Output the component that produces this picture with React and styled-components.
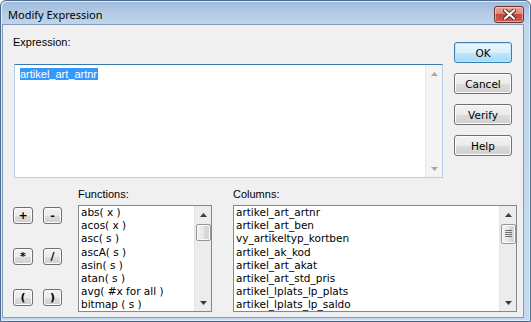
import React from 'react';
import styled, { createGlobalStyle } from 'styled-components';

const Global = createGlobalStyle`
  html, body { margin: 0; padding: 0; background: #ffffff; }
  body { width: 531px; height: 322px; overflow: hidden; font-family: "Liberation Sans", Arial, sans-serif; }
`;

const Window = styled.div`
  width: 531px;
  height: 322px;
  box-sizing: border-box;
  display: flex;
  flex-direction: column;
  border: 1px solid #4b6a8f;
  border-radius: 6px 6px 0 0;
  padding: 0 6px 3px 1px;
  background: linear-gradient(#9db8d9 0px, #b3cbe7 12px, #c2d6ed 24px, #c6d9ef 100%);
  box-shadow: inset 1px 1px 0 #e2ecf7, inset -1px -1px 0 #e2ecf7;
`;

const TitleBar = styled.div`
  height: 23px;
  display: flex;
  align-items: center;
  justify-content: space-between;
  padding-left: 6px;
`;

const Title = styled.div`
  font-family: "Noto Sans", "Open Sans", sans-serif;
  font-size: 11px;
  color: #000;
  margin-top: 3px;
`;

const CloseButton = styled.div`
  width: 28px;
  height: 15px;
  margin-top: 4px;
  border: 1px solid #6b3431;
  border-radius: 3px;
  display: flex;
  align-items: center;
  justify-content: center;
  background: linear-gradient(#eaa99b 0%, #dc8a7a 45%, #c5473a 50%, #cf5f4f 100%);
  box-shadow: inset 0 0 0 1px rgba(255, 220, 210, 0.55);
`;

const Client = styled.div`
  flex: 1;
  display: flex;
  flex-direction: column;
  background: #f0f0f0;
  border: 1px solid #7e9abd;
  font-size: 11px;
  color: #000;
`;

const TopSection = styled.div`
  display: flex;
  padding: 11px 0 0 10px;
`;

const ExprColumn = styled.div`
  display: flex;
  flex-direction: column;
`;

const Label = styled.div`
  height: 13px;
  line-height: 13px;
  margin-bottom: ${p => p.$gap || 4}px;
  white-space: nowrap;
`;

const TextBox = styled.div`
  margin-left: 1px;
  width: 429px;
  height: 114px;
  box-sizing: border-box;
  display: flex;
  background: #fff;
  border: 1px solid #b5cfe7;
  border-top-color: #3d7bad;
`;

const TextArea = styled.div`
  flex: 1;
  padding: 3px 0 0 5px;
  line-height: 13px;
`;

const Selected = styled.span`
  background: #3399ff;
  color: #fff;
  padding: 0 1px 0 0;
`;

const ButtonColumn = styled.div`
  display: flex;
  flex-direction: column;
  gap: 10px;
  margin-left: 11px;
  padding-top: 6px;
`;

const Button = styled.div`
  width: 58px;
  height: 21px;
  box-sizing: border-box;
  border: 1px solid ${p => (p.$default ? '#3c7fb1' : '#707070')};
  border-radius: 3px;
  display: flex;
  align-items: center;
  justify-content: center;
  font-family: "DejaVu Sans", sans-serif;
  font-size: 10.5px;
  color: #000;
  background: ${p =>
    p.$default
      ? 'linear-gradient(#eaf6fd 0%, #d9f0fc 50%, #bee6fd 51%, #a7d9f5 100%)'
      : 'linear-gradient(#f2f2f2 0%, #ebebeb 50%, #dddddd 51%, #cfcfcf 100%)'};
  box-shadow: inset 0 0 0 1px ${p => (p.$default ? '#bde4fb' : '#fcfcfc')};
`;

const BottomSection = styled.div`
  display: flex;
  align-items: flex-start;
  padding-left: 10px;
  margin-top: 10px;
`;

const OpsGrid = styled.div`
  display: grid;
  grid-template-columns: 20px 19px;
  grid-auto-rows: 17px;
  column-gap: 10px;
  row-gap: 24px;
  margin-top: 19px;
`;

const OpButton = styled(Button)`
  width: 100%;
  height: 17px;
  font-size: 11px;
  font-weight: bold;
  line-height: 1;
  padding-bottom: 1px;
`;

const Group = styled.div`
  display: flex;
  flex-direction: column;
  margin-left: ${p => p.$ml}px;
  width: ${p => p.$w}px;
`;

const ListBox = styled.div`
  height: 107px;
  box-sizing: border-box;
  border: 1px solid #828790;
  background: #fff;
  display: flex;
`;

const Items = styled.div`
  flex: 1;
  overflow: hidden;
  padding-left: 2px;
  font-family: "DejaVu Sans", sans-serif;
  font-size: 10.5px;
`;

const Item = styled.div`
  height: 13.2px;
  line-height: 13px;
  white-space: nowrap;
`;

const ScrollBar = styled.div`
  width: 17px;
  display: flex;
  flex-direction: column;
  background: ${p => (p.$disabled ? '#f4f4f4' : '#ececec')};
  border-left: 1px solid ${p => (p.$disabled ? '#e8e8e8' : '#e3e3e3')};
  box-sizing: border-box;
`;

const Arrow = styled.div`
  height: 17px;
  display: flex;
  align-items: center;
  justify-content: center;
`;

const Track = styled.div`
  flex: 1;
  display: flex;
  flex-direction: column;
  align-items: center;
`;

const Thumb = styled.div`
  width: 15px;
  height: ${p => p.$h}px;
  margin-top: 1px;
  box-sizing: border-box;
  border: 1px solid #979797;
  border-radius: 2px;
  background: linear-gradient(90deg, #f3f3f3 0%, #e7e7e7 50%, #dadada 51%, #d4d4d4 100%);
  box-shadow: inset 0 0 0 1px #fafafa;
  display: flex;
  align-items: center;
  justify-content: center;
`;

const ArrowGlyph = ({ dir, color }) => (
  <svg width="7" height="4" viewBox="0 0 7 4">
    {dir === 'up' ? (
      <polygon points="3.5,0 7,4 0,4" fill={color} />
    ) : (
      <polygon points="0,0 7,0 3.5,4" fill={color} />
    )}
  </svg>
);

const Grip = () => (
  <svg width="7" height="8" viewBox="0 0 7 8">
    {[0, 2, 4, 6].map(y => (
      <rect key={y} x="0" y={y} width="7" height="1" fill="#6f6f6f" />
    ))}
  </svg>
);

const VScroll = ({ disabled, thumb, grip }) => {
  const c = disabled ? '#a9a9a9' : '#3b3b3b';
  return (
    <ScrollBar $disabled={disabled}>
      <Arrow><ArrowGlyph dir="up" color={c} /></Arrow>
      <Track>{thumb ? <Thumb $h={thumb}>{grip && <Grip />}</Thumb> : null}</Track>
      <Arrow><ArrowGlyph dir="down" color={c} /></Arrow>
    </ScrollBar>
  );
};

const functions = [
  'abs( x )',
  'acos( x )',
  'asc( s )',
  'ascA( s )',
  'asin( s )',
  'atan( s )',
  'avg( #x for all )',
  'bitmap ( s )',
];

const columns = [
  'artikel_art_artnr',
  'artikel_art_ben',
  'vy_artikeltyp_kortben',
  'artikel_ak_kod',
  'artikel_art_akat',
  'artikel_art_std_pris',
  'artikel_lplats_lp_plats',
  'artikel_lplats_lp_saldo',
];

const ops = ['+', '-', '*', '/', '(', ')'];

export default function App() {
  return (
    <>
      <Global />
      <Window>
        <TitleBar>
          <Title>Modify Expression</Title>
          <CloseButton>
            <svg width="13" height="11" viewBox="0 0 13 11">
              <path
                d="M2 1.5 L11 9.5 M11 1.5 L2 9.5"
                stroke="#4a1e1a"
                strokeWidth="4"
                strokeLinecap="square"
              />
              <path
                d="M2 1.5 L11 9.5 M11 1.5 L2 9.5"
                stroke="#ffffff"
                strokeWidth="2.2"
                strokeLinecap="square"
              />
            </svg>
          </CloseButton>
        </TitleBar>
        <Client>
          <TopSection>
            <ExprColumn>
              <Label $gap={15}>Expression:</Label>
              <TextBox>
                <TextArea>
                  <Selected>artikel_art_artnr</Selected>
                </TextArea>
                <VScroll disabled />
              </TextBox>
            </ExprColumn>
            <ButtonColumn>
              <Button $default>OK</Button>
              <Button>Cancel</Button>
              <Button>Verify</Button>
              <Button>Help</Button>
            </ButtonColumn>
          </TopSection>
          <BottomSection>
            <OpsGrid>
              {ops.map(o => (
                <OpButton key={o}>{o}</OpButton>
              ))}
            </OpsGrid>
            <Group $ml={16} $w={134}>
              <Label>Functions:</Label>
              <ListBox>
                <Items>
                  {functions.map(f => (
                    <Item key={f}>{f}</Item>
                  ))}
                </Items>
                <VScroll thumb={17} />
              </ListBox>
            </Group>
            <Group $ml={21} $w={284}>
              <Label>Columns:</Label>
              <ListBox>
                <Items>
                  {columns.map(c => (
                    <Item key={c}>{c}</Item>
                  ))}
                </Items>
                <VScroll thumb={20} grip />
              </ListBox>
            </Group>
          </BottomSection>
        </Client>
      </Window>
    </>
  );
}
